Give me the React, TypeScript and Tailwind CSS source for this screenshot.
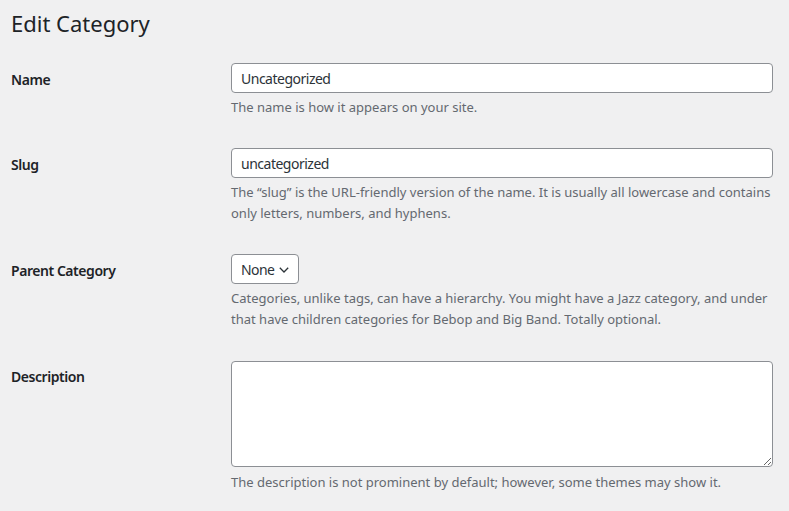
import { useState } from 'react';

const font = { fontFamily: '"Noto Sans", "Segoe UI", Roboto, sans-serif' };

function Row({ label, children }: { label: string; children: React.ReactNode }) {
  return (
    <div className="grid grid-cols-[220px_1fr]">
      <div className="pt-[23px] text-[14px] leading-[18px] font-semibold tracking-[-0.45px] text-[#1d2327]">{label}</div>
      <div className="py-[15px]">{children}</div>
    </div>
  );
}

function Help({ children }: { children: React.ReactNode }) {
  return <p className="mt-[4px] text-[13px] leading-[21px] text-[#646970]">{children}</p>;
}

const field =
  'block h-[30px] w-full rounded-[4px] border border-[#8c8f94] bg-white px-[9px] text-[14px] tracking-[-0.5px] text-[#2c3338] outline-none';

export default function App() {
  const [name, setName] = useState('Uncategorized');
  const [slug, setSlug] = useState('uncategorized');

  return (
    <div className="min-h-[511px] bg-[#f0f0f1] pl-[11px] pr-[16px]" style={font}>
      <h1 className="h-[48px] pt-[8px] text-[22px] leading-[30px] font-normal text-[#1d2327]">Edit Category</h1>

      <Row label="Name">
        <input value={name} onChange={(e) => setName(e.target.value)} className={field} />
        <Help>The name is how it appears on your site.</Help>
      </Row>

      <Row label="Slug">
        <input value={slug} onChange={(e) => setSlug(e.target.value)} className={field} />
        <Help>
          The “slug” is the URL-friendly version of the name. It is usually all lowercase and contains only letters,
          numbers, and hyphens.
        </Help>
      </Row>

      <Row label="Parent Category">
        <div className="relative inline-flex h-[30px] w-[68px] items-center rounded-[4px] border border-[#8c8f94] bg-white pl-[9px] text-[14px] tracking-[-0.6px] text-[#2c3338]">
          None
          <svg className="absolute right-[9px] top-[12px] h-[6px] w-[10px]" viewBox="0 0 10 6" fill="none">
            <path d="M0.8 0.8 5 5 9.2 0.8" stroke="#2c3338" strokeWidth="1.3" />
          </svg>
        </div>
        <Help>
          Categories, unlike tags, can have a hierarchy. You might have a Jazz category, and under that have children
          categories for Bebop and Big Band. Totally optional.
        </Help>
      </Row>

      <Row label="Description">
        <textarea className="mt-[1px] block h-[106px] w-full resize-y rounded-[4px] border border-[#8c8f94] bg-white px-[8px] py-[4px] text-[14px] outline-none" />
        <div className="pt-[1px]">
          <Help>The description is not prominent by default; however, some themes may show it.</Help>
        </div>
      </Row>
    </div>
  );
}
